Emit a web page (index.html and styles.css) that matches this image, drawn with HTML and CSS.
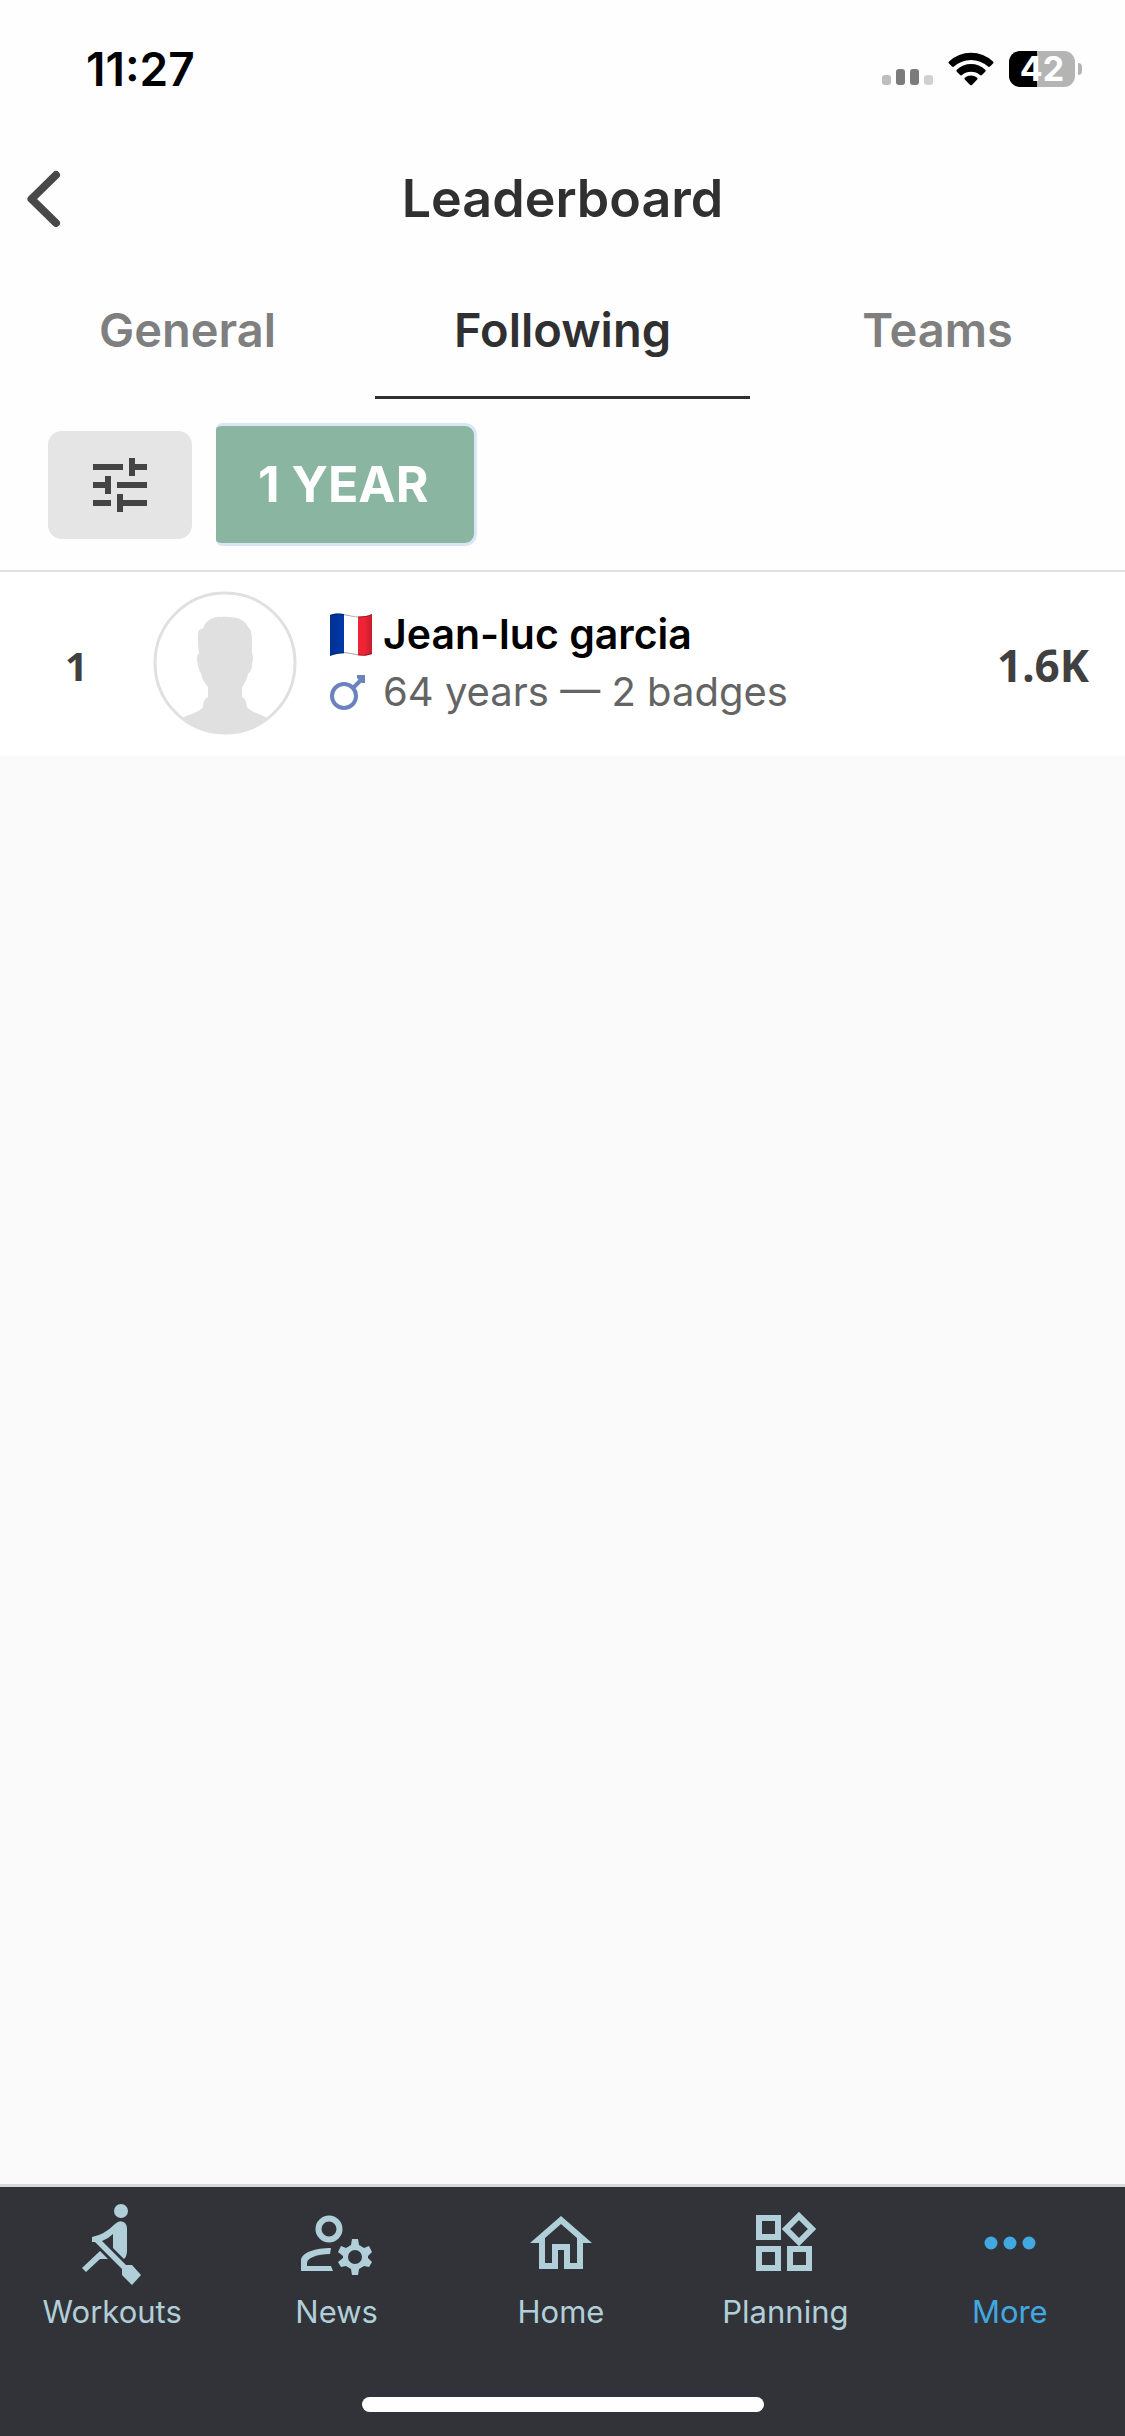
FILE: index.html
```html
<!DOCTYPE html>
<html lang="en">
<head>
<meta charset="utf-8">
<meta name="viewport" content="width=device-width, initial-scale=1">
<title>Leaderboard</title>
<link rel="stylesheet" href="styles.css">
</head>
<body>
<div class="screen">
  <div class="status">
    <span class="status-time">11:27</span>
    <div class="status-icons">
      <svg class="signal" width="51" height="36" viewBox="0 0 51 36" aria-hidden="true">
        <rect x="0" y="24" width="9" height="10" rx="3" fill="#bdbdbd"/>
        <rect x="14" y="18" width="9" height="16" rx="3" fill="#7b7b7b"/>
        <rect x="28" y="18" width="9" height="16" rx="3" fill="#7b7b7b"/>
        <rect x="42" y="24" width="9" height="10" rx="3" fill="#d0d0d0"/>
      </svg>
      <svg class="wifi" width="46" height="36" viewBox="0 0 46 36" aria-hidden="true">
        <path d="M1 10.500A32 32 0 0 1 45 10.500Q46 11.600 45 12.600L42 15.600Q41 16.500 40 15.600A25.500 25.500 0 0 0 6 15.600Q5 16.500 4 15.600L1 12.600Q0 11.600 1 10.500Z"/>
        <path d="M8.800 18.800A20.500 20.500 0 0 1 37.200 18.800Q38.200 19.800 37.200 20.800L33.900 24Q33 24.800 32 24A14 14 0 0 0 14 24Q13 24.800 12.100 24L8.800 20.800Q7.800 19.800 8.800 18.800Z"/>
        <path d="M16.800 26.800A9.500 9.500 0 0 1 29.200 26.800Q30 27.600 29.200 28.400L23.900 33.900Q23 34.700 22.100 33.900L16.800 28.400Q16 27.600 16.800 26.800Z"/>
      </svg>
      <span class="battery"><span class="battery-level">42</span></span>
    </div>
  </div>

  <header class="header">
    <button class="back" type="button" aria-label="Back">
      <svg width="35" height="58" viewBox="0 0 35 58"><path d="M30 5L5.500 29L30 53" fill="none" stroke="#484848" stroke-width="8" stroke-linecap="round" stroke-linejoin="round"/></svg>
    </button>
    <h1 class="title">Leaderboard</h1>
  </header>

  <nav class="tabs" aria-label="Leaderboards">
    <a class="tab" href="#general">General</a>
    <a class="tab tab-active" href="#following" aria-current="page">Following</a>
    <a class="tab" href="#teams">Teams</a>
  </nav>

  <div class="filters">
    <button class="filter-button" type="button" aria-label="Filters">
      <svg width="72" height="72" viewBox="0 0 24 24" fill="#444"><path d="M3 17v2h6v-2H3zM3 5v2h10V5H3zm10 16v-2h8v-2h-8v-2h-2v6h2zM7 9v2H3v2h4v2h2V9H7zm14 4v-2H11v2h10zm-6-4h2V7h4V5h-4V3h-2v6z"/></svg>
    </button>
    <button class="period" type="button">1 YEAR</button>
  </div>

  <main class="content">
    <ol class="ranking">
      <li class="entry">
        <span class="rank">1</span>
        <svg class="avatar" width="144" height="144" viewBox="0 0 144 144" aria-hidden="true">
          <clipPath id="avatar-clip"><circle cx="72" cy="72" r="71"/></clipPath>
          <path clip-path="url(#avatar-clip)" fill="#e0e0e0" d="M46 39C50 38 51 36 52 33C56 28 63 25 68 26C84 25 92 29 95 36C100 40 99 48 99 62Q101 66 99 73C99 79 97 81 95 83C94 88 92 92 89 96V106Q93 107 94 116C99 122 110 124 116 128L108 144H36L28 128C35 123 46 122 50 116Q50 108 55 106V96C51 92 49 87 48 82C45 78 45 73 44 69Q44 64 46 62C45 52 44 43 46 39Z"/>
          <circle cx="72" cy="72" r="70" fill="none" stroke="#e0e0e0" stroke-width="3"/>
        </svg>
        <div class="person">
          <div class="line name">
            <svg class="mark" width="44" height="44" viewBox="0 0 44 44" role="img" aria-label="France">
              <defs>
                <linearGradient id="wave" x1="0" x2="1"><stop offset="0" stop-color="#000" stop-opacity=".15"/><stop offset=".3" stop-color="#000" stop-opacity="0"/><stop offset=".8" stop-color="#000" stop-opacity="0"/><stop offset="1" stop-color="#000" stop-opacity=".2"/></linearGradient>
                <clipPath id="flag"><path d="M1 2C9-1 16 1 22 2.500S36 4 43 1V41C36 44 28 42.500 22 41S8 40 1 43Z"/></clipPath>
              </defs>
              <g clip-path="url(#flag)">
                <rect width="15" height="44" fill="#0038a8"/>
                <rect x="15" width="14" height="44" fill="#fff"/>
                <rect x="29" width="15" height="44" fill="#ee2436"/>
                <rect width="44" height="44" fill="url(#wave)"/>
                <path d="M1 2C9-1 16 1 22 2.500S36 4 43 1M43 41C36 44 28 42.500 22 41S8 40 1 43" fill="none" stroke="#000" stroke-opacity=".3" stroke-width="2"/>
              </g>
            </svg>
            <span>Jean-luc garcia</span>
          </div>
          <div class="line details">
            <svg class="mark" width="44" height="44" viewBox="0 0 44 44" fill="none" stroke="#6b83bd" role="img" aria-label="Male">
              <circle cx="15" cy="26" r="12" stroke-width="4"/>
              <path d="M24 18L33 9" stroke-width="4"/>
              <path d="M28 5H36V13L33 13L28 8Z" fill="#6b83bd" stroke="none"/>
            </svg>
            <span>64 years — 2 badges</span>
          </div>
        </div>
        <span class="score">1.6K</span>
      </li>
    </ol>
  </main>

  <footer class="bottom">
    <nav class="bottom-nav" aria-label="Main">
      <a class="nav-item" href="#workouts">
        <svg class="rower" width="84" height="84" viewBox="0 0 84 84" fill="currentColor" aria-hidden="true">
          <circle cx="51" cy="12" r="7"/>
          <path d="M45 25Q50 20 55 24Q57 26 57 29V52Q57 57 54 60L43 49V35Q38 40 32 42L56 66H62L71 76L62 86L52 76V70L25 43H22V38Q34 36 45 25Z"/>
          <path d="M30 52L38 60H30L16 73L12 69Z"/>
        </svg>
        <span>Workouts</span>
      </a>
      <a class="nav-item" href="#news">
        <svg width="84" height="84" viewBox="0 0 84 84" fill="currentColor" aria-hidden="true">
          <circle cx="34" cy="30" r="10.500" fill="none" stroke="currentColor" stroke-width="6"/>
          <path d="M36 49L35 55C22 55 12 59 12 64V67H36L38 72H6V62C6 53 21 49 36 49Z"/>
          <path fill-rule="evenodd" d="M57 40H63L64 46L69 49L74 47L77 53L73 57V59L77 63L74 68L69 67L64 70L63 76H57L56 70L51 67L46 68L43 63L48 59V57L43 53L46 47L51 49L56 46ZM60 51A7 7 0 1 0 60 65A7 7 0 1 0 60 51Z"/>
        </svg>
        <span>News</span>
      </a>
      <a class="nav-item" href="#home">
        <svg width="84" height="84" viewBox="0 0 84 84" fill="currentColor" aria-hidden="true">
          <path fill-rule="evenodd" d="M42 17L73 44H64V70H45V51H39V70H20V44H11ZM42 25L26 39V64H33V45H51V64H58V39Z"/>
        </svg>
        <span>Home</span>
      </a>
      <a class="nav-item" href="#planning">
        <svg width="84" height="84" viewBox="0 0 84 84" fill="none" stroke="currentColor" stroke-width="6" aria-hidden="true">
          <path d="M16 19H35V38H16ZM16 50H35V69H16ZM47 50H66V69H47ZM56 17L69 30L56 43L43 30Z"/>
        </svg>
        <span>Planning</span>
      </a>
      <a class="nav-item nav-active" href="#more" aria-current="page">
        <svg width="84" height="84" viewBox="0 0 84 84" fill="currentColor" aria-hidden="true">
          <circle cx="23" cy="44" r="6.500"/><circle cx="42" cy="44" r="6.500"/><circle cx="61" cy="44" r="6.500"/>
        </svg>
        <span>More</span>
      </a>
    </nav>
    <div class="home-indicator"></div>
  </footer>
</div>
</body>
</html>
```
FILE: styles.css
```css
* {
  box-sizing: border-box;
}

body {
  margin: 0;
  font-family: Inter, "Liberation Sans", sans-serif;
  background: #fafafa;
}

button {
  margin: 0;
  padding: 0;
  border: 0;
  background: none;
  font: inherit;
}

a {
  color: inherit;
  text-decoration: none;
}

svg {
  display: block;
  flex: none;
}

.screen {
  display: flex;
  flex-direction: column;
  min-height: 100vh;
}

.status,
.header,
.tabs,
.filters {
  background: #fefefe;
}

.status {
  display: flex;
  justify-content: space-between;
  align-items: center;
  height: 138px;
  padding: 0 43px 0 86px;
}

.status-time {
  font-size: 46px;
  font-weight: 600;
  line-height: 52px;
}

.status-icons {
  display: flex;
  align-items: center;
  gap: 15px;
}

.battery {
  display: flex;
  align-items: center;
  gap: 3px;
}

.battery::after {
  content: "";
  width: 4px;
  height: 12px;
  border-radius: 0 6px 6px 0;
  background: #b4b4b4;
}

.battery-level {
  width: 66px;
  border-radius: 11px;
  background: linear-gradient(to right, #000 28px, #b4b4b4 28px);
  color: #fff;
  font-size: 34px;
  font-weight: 700;
  line-height: 36px;
  text-align: center;
}

.header {
  display: grid;
  grid-template-columns: 120px 1fr 120px;
  align-items: center;
  height: 121px;
}

.back {
  padding: 0 26px;
}

.title {
  margin: 0;
  color: #303030;
  font-size: 52px;
  font-weight: 600;
  line-height: 64px;
  text-align: center;
}

.tabs {
  display: grid;
  grid-template-columns: repeat(3, 1fr);
}

.tab {
  padding: 41px 0 36px;
  border-bottom: 3px solid transparent;
  color: #7f7f7f;
  font-size: 47px;
  font-weight: 600;
  line-height: 60px;
  text-align: center;
}

.tab-active {
  border-color: #303032;
  color: #303032;
}

.filters {
  display: flex;
  align-items: center;
  gap: 24px;
  padding: 24px 48px;
  border-bottom: 2px solid #e0e0e0;
}

.filter-button {
  display: grid;
  place-items: center;
  width: 144px;
  height: 108px;
  border-radius: 14px;
  background: #e5e5e5;
}

.period {
  padding: 0 46px 0 42px;
  border: 3px solid #dae6f5;
  border-left: 0;
  border-radius: 6px 12px 12px 6px;
  background: #8ab5a1;
  color: #fff;
  font-size: 50px;
  font-weight: 700;
  line-height: 117px;
}

.content {
  flex: 1;
}

.ranking {
  margin: 0;
  padding: 0;
  list-style: none;
}

.entry {
  display: flex;
  align-items: center;
  padding: 19px 36px 21px 0;
  background: #fff;
}

.rank,
.score {
  padding-top: 4px;
  color: #404040;
  font-family: "Noto Sans", "Open Sans", sans-serif;
  font-weight: 700;
}

.rank {
  width: 153px;
  font-size: 40px;
  text-align: center;
}

.person {
  flex: 1;
  padding-left: 32px;
}

.line {
  display: flex;
  align-items: center;
  gap: 10px;
  line-height: 57px;
}

.name {
  font-size: 41px;
  font-weight: 600;
}

.details {
  color: #646464;
  font-size: 40px;
}

.score {
  font-size: 44px;
}

.bottom {
  display: flex;
  flex-direction: column;
  align-items: center;
  padding-bottom: 24px;
  border-top: 3px solid #d8d8da;
  background: #323338;
}

.bottom-nav {
  display: grid;
  grid-template-columns: repeat(5, 1fr);
  width: 100%;
  padding: 12px 3px 66px 0;
}

.nav-item {
  display: flex;
  flex-direction: column;
  align-items: center;
  gap: 10px;
  color: #b1cfd9;
  font-size: 31px;
  font-weight: 400;
  line-height: 38px;
}

.rower {
  overflow: visible;
}

.nav-active {
  color: #41a8e1;
}

.home-indicator {
  width: 402px;
  height: 15px;
  border-radius: 8px;
  background: #fff;
}
```
